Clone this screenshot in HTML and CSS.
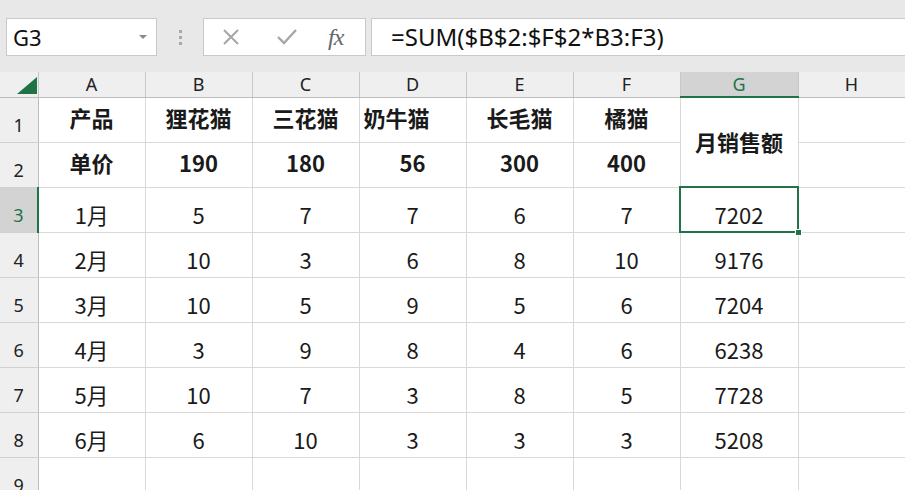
FILE: index.html
```html
<!DOCTYPE html>
<html lang="zh-CN">
<head>
    <meta charset="UTF-8">
    <title>月销售额</title>
    <link rel="stylesheet" href="styles.css">
</head>
<body>
<div class="toolbar">
    <div class="name-box">
        <span class="name-text">G3</span>
        <span class="caret"></span>
    </div>
    <div class="grip">
        <span></span><span></span><span></span>
    </div>
    <div class="fx-buttons">
        <svg class="btn-icon" width="20" height="20" viewBox="0 0 20 20">
            <path d="M3 3 L17 17 M17 3 L3 17" stroke="#a6a6a6" stroke-width="2" fill="none"/>
        </svg>
        <svg class="btn-icon" width="22" height="20" viewBox="0 0 22 20">
            <path d="M2 10 L8 16 L20 3" stroke="#a6a6a6" stroke-width="2.4" fill="none"/>
        </svg>
        <span class="fx">fx</span>
    </div>
    <div class="formula">=SUM($B$2:$F$2*B3:F3)</div>
</div>

<table class="sheet">
    <colgroup>
        <col class="c-row">
        <col class="c-std"><col class="c-std"><col class="c-std">
        <col class="c-std"><col class="c-std"><col class="c-std">
        <col class="c-wide">
        <col class="c-std">
    </colgroup>
    <tr class="head-row">
        <th class="corner">
            <svg width="20" height="17" viewBox="0 0 20 17"><polygon points="20,0 20,17 0,17" fill="#217346"/></svg>
        </th>
        <th>A</th><th>B</th><th>C</th><th>D</th><th>E</th><th>F</th>
        <th class="head-active">G</th><th>H</th>
    </tr>
    <tr class="title-row">
        <th class="row-head">1</th>
        <td>产品</td><td>狸花猫</td><td>三花猫</td><td class="left">奶牛猫</td><td>长毛猫</td><td>橘猫</td>
        <td rowspan="2" class="merged">月销售额</td><td></td>
    </tr>
    <tr class="title-row">
        <th class="row-head">2</th>
        <td>单价</td><td>190</td><td>180</td><td>56</td><td>300</td><td>400</td>
        <td></td>
    </tr>
    <tr>
        <th class="row-head row-active">3</th>
        <td>1月</td><td>5</td><td>7</td><td>7</td><td>6</td><td>7</td>
        <td class="active">7202</td><td></td>
    </tr>
    <tr>
        <th class="row-head">4</th>
        <td>2月</td><td>10</td><td>3</td><td>6</td><td>8</td><td>10</td>
        <td>9176</td><td></td>
    </tr>
    <tr>
        <th class="row-head">5</th>
        <td>3月</td><td>10</td><td>5</td><td>9</td><td>5</td><td>6</td>
        <td>7204</td><td></td>
    </tr>
    <tr>
        <th class="row-head">6</th>
        <td>4月</td><td>3</td><td>9</td><td>8</td><td>4</td><td>6</td>
        <td>6238</td><td></td>
    </tr>
    <tr>
        <th class="row-head">7</th>
        <td>5月</td><td>10</td><td>7</td><td>3</td><td>8</td><td>5</td>
        <td>7728</td><td></td>
    </tr>
    <tr>
        <th class="row-head">8</th>
        <td>6月</td><td>6</td><td>10</td><td>3</td><td>3</td><td>3</td>
        <td>5208</td><td></td>
    </tr>
    <tr>
        <th class="row-head">9</th>
        <td></td><td></td><td></td><td></td><td></td><td></td>
        <td></td><td></td>
    </tr>
</table>
</body>
</html>
```

FILE: styles.css
```css
body, html {
    margin: 0;
    padding: 0;
    overflow: hidden;
}
body {
    width: 905px;
    height: 490px;
    background: #ffffff;
    font-family: "Noto Sans", "Noto Sans CJK SC", sans-serif;
    color: #222;
}

/* 顶部编辑栏 */
.toolbar {
    display: flex;
    align-items: flex-start;
    height: 72px;
    box-sizing: border-box;
    padding-top: 18px;
    background: #e8e8e8;
}
.name-box {
    display: flex;
    align-items: center;
    justify-content: space-between;
    margin-left: 6px;
    width: 151px;
    height: 38px;
    box-sizing: border-box;
    padding: 0 9px 0 6px;
    background: #fff;
    border: 1px solid #c9c9c9;
}
.name-text {
    font-size: 22px;
    color: #111;
}
.caret {
    width: 0;
    height: 0;
    border-left: 4px solid transparent;
    border-right: 4px solid transparent;
    border-top: 4px solid #8a8a8a;
}
.grip {
    width: 46px;
    height: 38px;
    display: flex;
    flex-direction: column;
    align-items: center;
    justify-content: center;
    gap: 3px;
}
.grip span {
    width: 3px;
    height: 3px;
    background: #a8a8a8;
}
.fx-buttons {
    display: flex;
    align-items: center;
    width: 163px;
    height: 38px;
    box-sizing: border-box;
    padding-left: 17px;
    background: #fff;
    border: 1px solid #c9c9c9;
}
.btn-icon {
    margin-right: 35px;
}
.btn-icon + .btn-icon {
    margin-right: 30px;
}
.fx {
    font-family: "Liberation Serif", serif;
    font-style: italic;
    font-size: 24px;
    color: #666;
    letter-spacing: -1px;
}
.formula {
    flex: 1;
    height: 38px;
    box-sizing: border-box;
    margin-left: 5px;
    padding-left: 19px;
    background: #fff;
    border: 1px solid #c9c9c9;
    border-right: none;
    font-size: 24px;
    line-height: 35px;
    color: #111;
}

/* 表格区 */
.sheet {
    width: 905px;
    table-layout: fixed;
    border-collapse: collapse;
}
.c-row { width: 38px; }
.c-std { width: 107px; }
.c-wide { width: 118px; }

.sheet th, .sheet td {
    padding: 0;
    text-align: center;
    white-space: nowrap;
    overflow: hidden;
}
.sheet td {
    border: 1px solid #d9d9d9;
    font-family: "Noto Sans CJK SC", sans-serif;
    font-size: 22px;
    color: #1a1a1a;
    padding-top: 9px;
}
.head-row th {
    background: #efefef;
    border-left: 1px solid #c8c8c8;
    border-right: 1px solid #c8c8c8;
    border-bottom: 1px solid #bdbdbd;
    font-family: "Noto Sans", sans-serif;
    font-weight: normal;
    font-size: 18px;
    line-height: 22px;
    color: #222;
}
.head-row th.corner {
    border-left: none;
    text-align: right;
    vertical-align: bottom;
    padding: 0 1px 3px 0;
    line-height: 0;
}
.head-row th.head-active {
    background: #d3d3d3;
    color: #217346;
    border-bottom: 2px solid #217346;
}
.sheet tr {
    height: 45px;
}
.sheet tr.head-row {
    height: 25px;
}
.row-head {
    background: #efefef;
    border-top: 1px solid #d0d0d0;
    border-bottom: 1px solid #d0d0d0;
    border-right: 1px solid #bdbdbd;
    font-family: "Noto Sans", sans-serif;
    font-weight: normal;
    font-size: 18px;
    color: #222;
    padding-top: 10px !important;
}
.row-head.row-active {
    background: #d3d3d3;
    color: #217346;
    border-right: 2px solid #217346;
}
.title-row td {
    font-weight: bold;
    padding-top: 0;
    padding-bottom: 6px;
}
.title-row td.merged {
    padding-bottom: 2px;
}
.title-row td.left {
    text-align: left;
    padding-left: 4px;
}

/* 当前选中单元格 */
.sheet td.active {
    position: relative;
    overflow: visible;
    outline: 2px solid #217346;
    outline-offset: -1px;
}
.sheet td.active::before {
    content: "";
    position: absolute;
    right: -4px;
    bottom: -4px;
    width: 5px;
    height: 5px;
    background: #217346;
    border: 1px solid #fff;
    z-index: 1;
}
```
